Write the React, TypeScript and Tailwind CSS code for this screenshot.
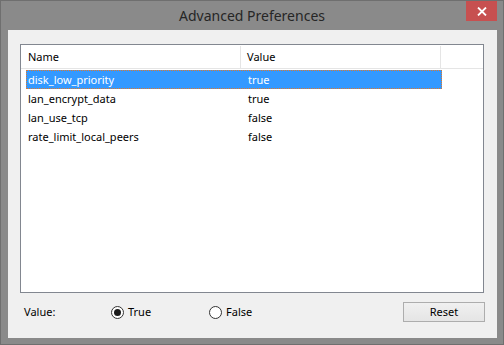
import React from "react";

const rows = [
  { name: "disk_low_priority", value: "true" },
  { name: "lan_encrypt_data", value: "true" },
  { name: "lan_use_tcp", value: "false" },
  { name: "rate_limit_local_peers", value: "false" },
];

function Radio({ checked, label }: { checked: boolean; label: string }) {
  return (
    <div className="flex items-center gap-[4px]">
      <div className="w-[13px] h-[13px] rounded-full border border-[#333] bg-white flex items-center justify-center">
        {checked && <div className="w-[7px] h-[7px] rounded-full bg-[#1a1a1a]" />}
      </div>
      <span className="pt-[1px]">{label}</span>
    </div>
  );
}

export default function App() {
  return (
    <div
      className="w-[504px] h-[345px] border border-[#6f6f6f] bg-[#8a8a8a] flex flex-col text-[11px] text-black"
      style={{ fontFamily: '"Noto Sans", "Open Sans", sans-serif' }}
    >
      <div className="h-[29px] relative flex items-center justify-center shrink-0">
        <span className="text-[14px] text-[#262626] leading-none pt-[1px]">Advanced Preferences</span>
        <div className="absolute right-[6px] top-0 w-[31px] h-[20px] bg-[#c75050] flex items-center justify-center">
          <svg width="10" height="9" viewBox="0 0 10 9">
            <path d="M1 0.5 L9 8.5 M9 0.5 L1 8.5" stroke="white" strokeWidth="1.8" />
          </svg>
        </div>
      </div>
      <div className="flex-1 ml-[7px] mr-[6px] mb-[6px] bg-[#f0f0f0] flex flex-col">
        <div className="mt-[14px] ml-[12px] w-[464px] h-[249px] border border-[#828790] bg-white flex flex-col">
          <div className="h-[24px] flex border-b border-[#e5e5e5] shrink-0 pt-[1px]">
            <div className="w-[220px] border-r border-[#e5e5e5] pl-[7px] flex items-center">Name</div>
            <div className="w-[200px] border-r border-[#e5e5e5] pl-[6px] flex items-center">Value</div>
            <div className="flex-1" />
          </div>
          <div className="mt-[1px] ml-[5px] w-[416px] flex flex-col">
            {rows.map((r, i) => (
              <div
                key={r.name}
                className={
                  i === 0
                    ? "h-[19px] flex items-center pt-[1px] bg-[#3399ff] text-white border border-dotted border-[#e0782a]"
                    : "h-[19px] flex items-center pt-[1px] border border-transparent"
                }
              >
                <div className="w-[221px] pl-[1px]">{r.name}</div>
                <div>{r.value}</div>
              </div>
            ))}
          </div>
        </div>
        <div className="mt-[9px] flex items-center h-[20px] pl-[16px] pr-[12px]">
          <span className="w-[87px] pt-[1px]">Value:</span>
          <div className="w-[98px]">
            <Radio checked label="True" />
          </div>
          <Radio checked={false} label="False" />
          <div className="flex-1" />
          <div className="w-[82px] h-[20px] border border-[#adadad] bg-gradient-to-b from-[#f0f0f0] to-[#e5e5e5] flex items-center justify-center pt-[1px]">
            Reset
          </div>
        </div>
      </div>
    </div>
  );
}
